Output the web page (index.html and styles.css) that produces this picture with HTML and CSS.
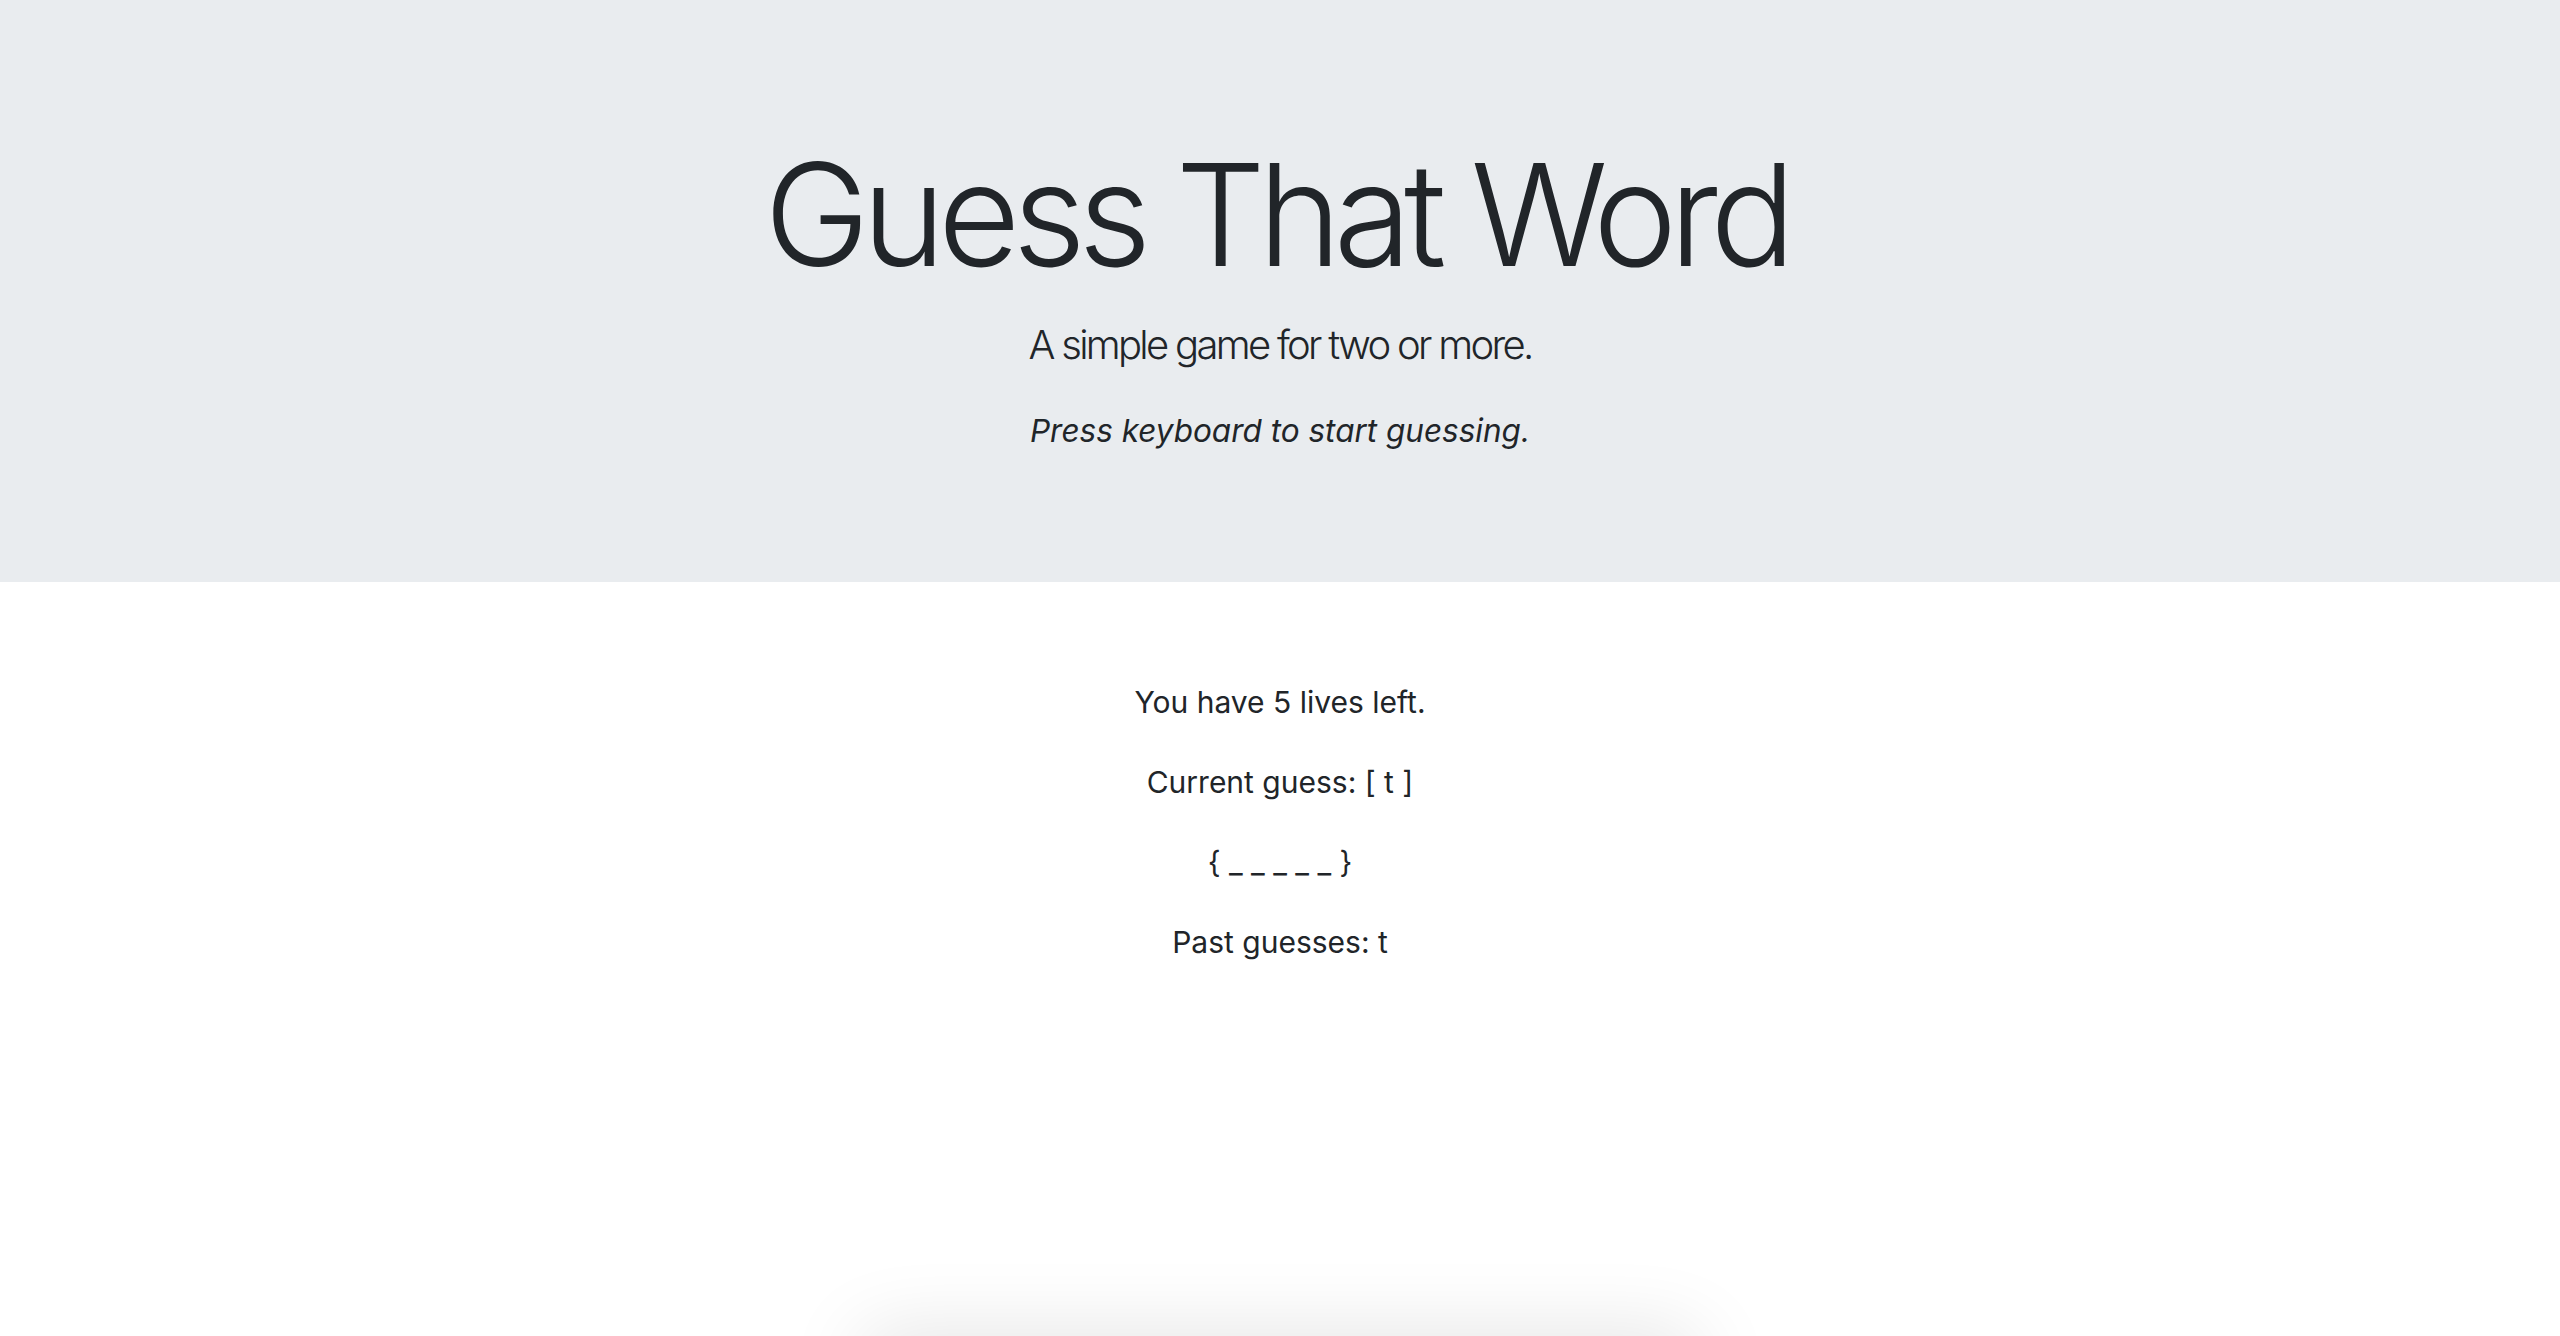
FILE: index.html
```html
<!DOCTYPE html>
<html lang="en">
<head>
<meta charset="utf-8">
<title>Guess That Word</title>
<link rel="stylesheet" href="styles.css">
</head>
<body>
<header class="jumbotron">
  <h1 class="display">Guess That Word</h1>
  <p class="lead">A simple game for two or more.</p>
  <p class="hint"><em>Press keyboard to start guessing.</em></p>
</header>
<main class="game">
  <p class="line">You have 5 lives left.</p>
  <p class="line">Current guess: [ t ]</p>
  <p class="line word">{ _ _ _ _ _ }</p>
  <p class="line">Past guesses: t</p>
</main>
<div class="dock-shadow"></div>
</body>
</html>
```
FILE: styles.css
```css
html, body {
  margin: 0;
  padding: 0;
  background: #ffffff;
}
body {
  font-family: Inter, "Noto Sans", "Liberation Sans", sans-serif;
  color: #212529;
  overflow: hidden;
  height: 1336px;
}
.jumbotron {
  box-sizing: border-box;
  height: 582px;
  background: #e9ecef;
  padding: 128px 64px 0;
  text-align: center;
}
.display {
  font-size: 142px;
  font-weight: 300;
  line-height: 172px;
  margin: 0 0 15px;
  letter-spacing: -7.8px;
  text-indent: -7.8px;
}
.lead {
  font-size: 40px;
  font-weight: 300;
  line-height: 60px;
  margin: 0 0 32px;
  letter-spacing: -2.7px;
}
.hint {
  font-size: 31.5px;
  font-weight: 400;
  line-height: 48px;
  margin: 0;
}
.game {
  padding-top: 96px;
  text-align: center;
}
.line {
  font-size: 30px;
  line-height: 48px;
  margin: 0 0 32px;
}
.dock-shadow {
  position: fixed;
  left: 860px;
  width: 840px;
  bottom: -60px;
  height: 60px;
  border-radius: 24px;
  background: #ffffff;
  box-shadow: 0 0 80px rgba(0, 0, 0, 0.13);
}
```
